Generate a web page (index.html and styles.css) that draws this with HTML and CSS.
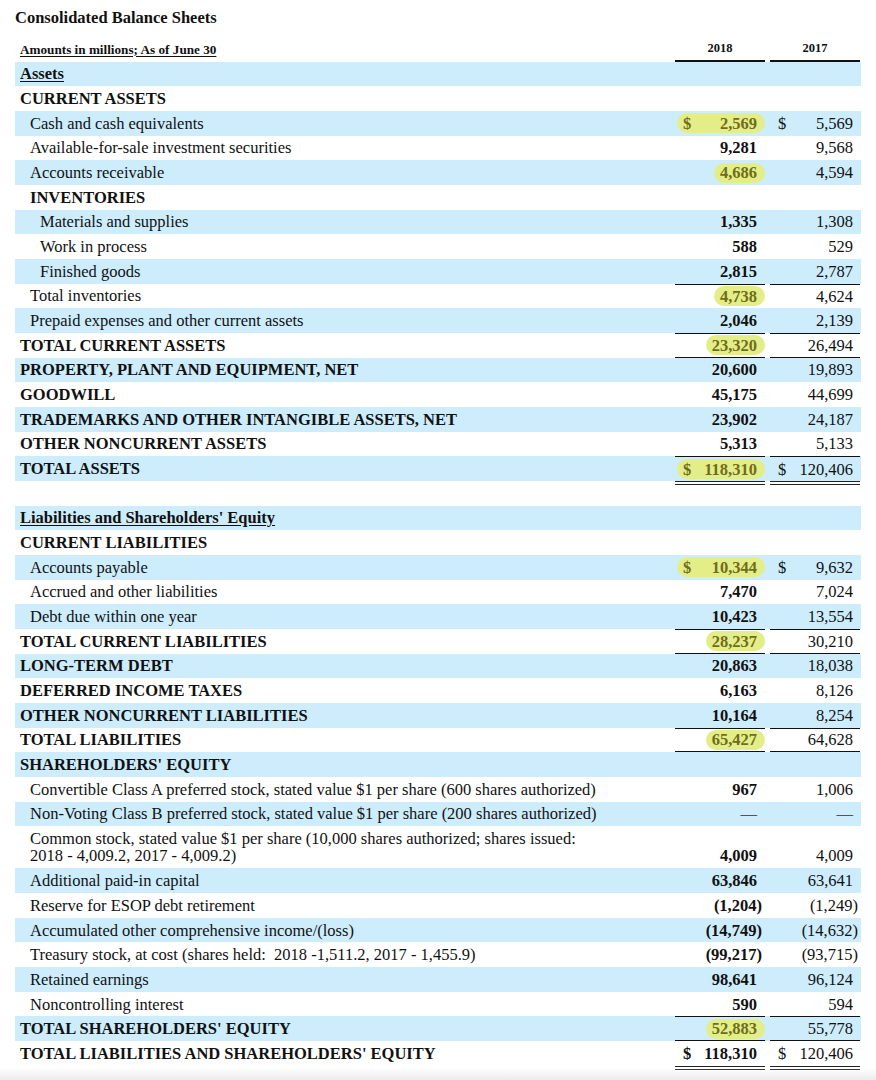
FILE: index.html
```html
<!DOCTYPE html>
<html>
<head>
<meta charset="utf-8">
<link rel="stylesheet" href="styles.css">
</head>
<body>
<div class="sheet">
  <div class="title">Consolidated Balance Sheets</div>
  <div class="hdr">
    <div class="hlbl"><span>Amounts in millions; As of June 30</span></div>
    <div class="yr y18">2018</div>
    <div class="yr y17">2017</div>
  </div>

  <div class="row blue"><div class="lbl b u">Assets</div><div class="c18"><div class="val"></div></div><div class="c17"><div class="val"></div></div></div>
  <div class="row"><div class="lbl b">CURRENT ASSETS</div><div class="c18"><div class="val"></div></div><div class="c17"><div class="val"></div></div></div>
  <div class="row blue"><div class="lbl i1">Cash and cash equivalents</div><div class="c18"><div class="val"><span class="pill"><span>$</span><span>2,569</span></span></div></div><div class="c17"><div class="val"><span>$</span><span>5,569</span></div></div></div>
  <div class="row"><div class="lbl i1">Available-for-sale investment securities</div><div class="c18"><div class="val"><span></span><span>9,281</span></div></div><div class="c17"><div class="val"><span></span><span>9,568</span></div></div></div>
  <div class="row blue"><div class="lbl i1">Accounts receivable</div><div class="c18"><div class="val"><span></span><span class="hl">4,686</span></div></div><div class="c17"><div class="val"><span></span><span>4,594</span></div></div></div>
  <div class="row"><div class="lbl i1 b">INVENTORIES</div><div class="c18"><div class="val"></div></div><div class="c17"><div class="val"></div></div></div>
  <div class="row blue"><div class="lbl i2">Materials and supplies</div><div class="c18"><div class="val"><span></span><span>1,335</span></div></div><div class="c17"><div class="val"><span></span><span>1,308</span></div></div></div>
  <div class="row"><div class="lbl i2">Work in process</div><div class="c18"><div class="val"><span></span><span>588</span></div></div><div class="c17"><div class="val"><span></span><span>529</span></div></div></div>
  <div class="row blue"><div class="lbl i2">Finished goods</div><div class="c18"><div class="val"><span></span><span>2,815</span></div></div><div class="c17"><div class="val"><span></span><span>2,787</span></div></div></div>
  <div class="row"><div class="lbl i1">Total inventories</div><div class="c18"><div class="val t"><span></span><span class="hl">4,738</span></div></div><div class="c17"><div class="val t"><span></span><span>4,624</span></div></div></div>
  <div class="row blue"><div class="lbl i1">Prepaid expenses and other current assets</div><div class="c18"><div class="val"><span></span><span>2,046</span></div></div><div class="c17"><div class="val"><span></span><span>2,139</span></div></div></div>
  <div class="row"><div class="lbl b">TOTAL CURRENT ASSETS</div><div class="c18"><div class="val t bt"><span></span><span class="hl">23,320</span></div></div><div class="c17"><div class="val t bt"><span></span><span>26,494</span></div></div></div>
  <div class="row blue"><div class="lbl b">PROPERTY, PLANT AND EQUIPMENT, NET</div><div class="c18"><div class="val"><span></span><span>20,600</span></div></div><div class="c17"><div class="val"><span></span><span>19,893</span></div></div></div>
  <div class="row"><div class="lbl b">GOODWILL</div><div class="c18"><div class="val"><span></span><span>45,175</span></div></div><div class="c17"><div class="val"><span></span><span>44,699</span></div></div></div>
  <div class="row blue"><div class="lbl b">TRADEMARKS AND OTHER INTANGIBLE ASSETS, NET</div><div class="c18"><div class="val"><span></span><span>23,902</span></div></div><div class="c17"><div class="val"><span></span><span>24,187</span></div></div></div>
  <div class="row"><div class="lbl b">OTHER NONCURRENT ASSETS</div><div class="c18"><div class="val"><span></span><span>5,313</span></div></div><div class="c17"><div class="val"><span></span><span>5,133</span></div></div></div>
  <div class="row blue"><div class="lbl b">TOTAL ASSETS</div><div class="c18"><div class="val t dbl"><span class="pill"><span>$</span><span>118,310</span></span></div></div><div class="c17"><div class="val t dbl"><span>$</span><span>120,406</span></div></div></div>
  <div class="row"><div class="lbl"></div><div class="c18"><div class="val"></div></div><div class="c17"><div class="val"></div></div></div>

  <div class="row blue"><div class="lbl b u">Liabilities and Shareholders' Equity</div><div class="c18"><div class="val"></div></div><div class="c17"><div class="val"></div></div></div>
  <div class="row"><div class="lbl b">CURRENT LIABILITIES</div><div class="c18"><div class="val"></div></div><div class="c17"><div class="val"></div></div></div>
  <div class="row blue"><div class="lbl i1">Accounts payable</div><div class="c18"><div class="val"><span class="pill"><span>$</span><span>10,344</span></span></div></div><div class="c17"><div class="val"><span>$</span><span>9,632</span></div></div></div>
  <div class="row"><div class="lbl i1">Accrued and other liabilities</div><div class="c18"><div class="val"><span></span><span>7,470</span></div></div><div class="c17"><div class="val"><span></span><span>7,024</span></div></div></div>
  <div class="row blue"><div class="lbl i1">Debt due within one year</div><div class="c18"><div class="val"><span></span><span>10,423</span></div></div><div class="c17"><div class="val"><span></span><span>13,554</span></div></div></div>
  <div class="row"><div class="lbl b">TOTAL CURRENT LIABILITIES</div><div class="c18"><div class="val t bt"><span></span><span class="hl">28,237</span></div></div><div class="c17"><div class="val t bt"><span></span><span>30,210</span></div></div></div>
  <div class="row blue"><div class="lbl b">LONG-TERM DEBT</div><div class="c18"><div class="val"><span></span><span>20,863</span></div></div><div class="c17"><div class="val"><span></span><span>18,038</span></div></div></div>
  <div class="row"><div class="lbl b">DEFERRED INCOME TAXES</div><div class="c18"><div class="val"><span></span><span>6,163</span></div></div><div class="c17"><div class="val"><span></span><span>8,126</span></div></div></div>
  <div class="row blue"><div class="lbl b">OTHER NONCURRENT LIABILITIES</div><div class="c18"><div class="val"><span></span><span>10,164</span></div></div><div class="c17"><div class="val"><span></span><span>8,254</span></div></div></div>
  <div class="row"><div class="lbl b">TOTAL LIABILITIES</div><div class="c18"><div class="val t bt"><span></span><span class="hl">65,427</span></div></div><div class="c17"><div class="val t bt"><span></span><span>64,628</span></div></div></div>
  <div class="row blue"><div class="lbl b">SHAREHOLDERS' EQUITY</div><div class="c18"><div class="val"></div></div><div class="c17"><div class="val"></div></div></div>
  <div class="row"><div class="lbl i1">Convertible Class A preferred stock, stated value $1 per share (600 shares authorized)</div><div class="c18"><div class="val"><span></span><span>967</span></div></div><div class="c17"><div class="val"><span></span><span>1,006</span></div></div></div>
  <div class="row blue"><div class="lbl i1">Non-Voting Class B preferred stock, stated value $1 per share (200 shares authorized)</div><div class="c18"><div class="val"><span></span><span class="dash">—</span></div></div><div class="c17"><div class="val"><span></span><span class="dash">—</span></div></div></div>
  <div class="row tall"><div class="lbl i1">Common stock, stated value $1 per share (10,000 shares authorized; shares issued:<br>2018 - 4,009.2, 2017 - 4,009.2)</div><div class="c18"><div class="val"><span></span><span>4,009</span></div></div><div class="c17"><div class="val"><span></span><span>4,009</span></div></div></div>
  <div class="row blue"><div class="lbl i1">Additional paid-in capital</div><div class="c18"><div class="val"><span></span><span>63,846</span></div></div><div class="c17"><div class="val"><span></span><span>63,641</span></div></div></div>
  <div class="row"><div class="lbl i1">Reserve for ESOP debt retirement</div><div class="c18"><div class="val"><span></span><span class="neg">(1,204)</span></div></div><div class="c17"><div class="val"><span></span><span class="neg">(1,249)</span></div></div></div>
  <div class="row blue"><div class="lbl i1">Accumulated other comprehensive income/(loss)</div><div class="c18"><div class="val"><span></span><span class="neg">(14,749)</span></div></div><div class="c17"><div class="val"><span></span><span class="neg">(14,632)</span></div></div></div>
  <div class="row"><div class="lbl i1">Treasury stock, at cost (shares held: &nbsp;2018 -1,511.2, 2017 - 1,455.9)</div><div class="c18"><div class="val"><span></span><span class="neg">(99,217)</span></div></div><div class="c17"><div class="val"><span></span><span class="neg">(93,715)</span></div></div></div>
  <div class="row blue"><div class="lbl i1">Retained earnings</div><div class="c18"><div class="val"><span></span><span>98,641</span></div></div><div class="c17"><div class="val"><span></span><span>96,124</span></div></div></div>
  <div class="row"><div class="lbl i1">Noncontrolling interest</div><div class="c18"><div class="val"><span></span><span>590</span></div></div><div class="c17"><div class="val"><span></span><span>594</span></div></div></div>
  <div class="row blue"><div class="lbl b">TOTAL SHAREHOLDERS' EQUITY</div><div class="c18"><div class="val t bt"><span></span><span class="hl">52,883</span></div></div><div class="c17"><div class="val t bt"><span></span><span>55,778</span></div></div></div>
  <div class="row"><div class="lbl b">TOTAL LIABILITIES AND SHAREHOLDERS' EQUITY</div><div class="c18"><div class="val dbl"><span>$</span><span>118,310</span></div></div><div class="c17"><div class="val dbl"><span>$</span><span>120,406</span></div></div></div>
</div>
<div class="fade"></div>
</body>
</html>
```

FILE: styles.css
```css
html, body {
  margin: 0;
  padding: 0;
  background: #ffffff;
}
body {
  font-family: "Liberation Serif", "Times New Roman", serif;
  color: #111111;
  width: 876px;
  height: 1080px;
  overflow: hidden;
  position: relative;
}
.sheet {
  padding: 9px 0 0 15px;
  width: 846px;
}
.title {
  font-weight: bold;
  font-size: 16.5px;
  line-height: 18px;
  height: 18px;
}
.hdr {
  display: grid;
  grid-template-columns: 658px 95px 93px;
  height: 34.5px;
}
.hlbl {
  display: flex;
  align-items: flex-end;
  padding: 0 0 5px 5px;
  font-weight: bold;
  font-size: 13.2px;
  line-height: 15px;
}
.hlbl span {
  text-decoration: underline;
  text-underline-offset: 2px;
}
.yr {
  display: flex;
  align-items: flex-end;
  justify-content: center;
  font-weight: bold;
  font-size: 12.5px;
  line-height: 15px;
  padding-bottom: 4px;
  border-bottom: 2px solid #111;
  box-sizing: border-box;
}
.y18 { margin: 0 3px 0 2px; }
.y17 { margin: 0 1px 0 2px; }

.row {
  display: grid;
  grid-template-columns: 658px 95px 93px;
  height: 24.68px;
  font-size: 16.5px;
  line-height: 19px;
}
.row.blue {
  background: #cdedfd;
}
.row.tall {
  height: 42.1px;
}
.lbl {
  display: flex;
  align-items: center;
  padding-left: 5px;
  white-space: nowrap;
}
.tall .lbl {
  align-items: flex-end;
  line-height: 17px;
  padding-bottom: 4px;
  box-sizing: border-box;
}
.lbl.i1 { padding-left: 15px; }
.lbl.i2 { padding-left: 25px; }
.lbl.b { font-weight: bold; }
.lbl.u { text-decoration: underline; text-underline-offset: 2px; }

.c18, .c17 {
  display: flex;
}
.c18 .val {
  margin: 0 3px 0 2px;
  padding: 0 8px;
  font-weight: bold;
}
.c17 .val {
  margin: 0 1px 0 2px;
  padding: 0 7px 0 8px;
}
.val {
  flex: 1;
  display: flex;
  justify-content: space-between;
  align-items: center;
  box-sizing: border-box;
  height: 100%;
}
.tall .val {
  align-items: flex-end;
  line-height: 17px;
  padding-bottom: 4px;
}
.val.t { border-top: 1.5px solid #111; }
.val.bt { border-bottom: 1.5px solid #111; }
.val.dbl {
  border-bottom: 4.5px double #222;
  height: calc(100% + 4px);
}
.pill {
  flex: 1;
  display: flex;
  justify-content: space-between;
  align-items: center;
  height: 20px;
  margin: 0 -8px 0 -6px;
  padding: 0 8px 0 6px;
  border-radius: 10px;
  background: #e4ee88;
  color: #6f6d1c;
}
.hl {
  display: inline-flex;
  align-items: center;
  height: 20px;
  padding: 0 8px 0 6px;
  margin-right: -8px;
  border-radius: 10px;
  background: #e4ee88;
  color: #6f6d1c;
}
.neg {
  margin-right: -5px;
}
.dash {
  color: #555;
  font-weight: normal;
}
.fade {
  position: absolute;
  left: 0;
  right: 0;
  bottom: 0;
  height: 12px;
  background: linear-gradient(rgba(240,240,240,0), #ebebeb);
}
```
